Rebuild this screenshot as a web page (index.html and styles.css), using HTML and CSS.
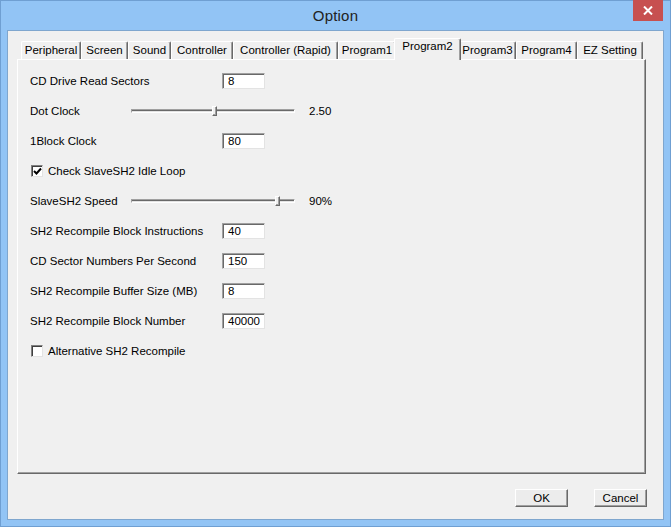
FILE: index.html
```html
<!DOCTYPE html>
<html>
<head>
<meta charset="utf-8">
<link rel="stylesheet" href="styles.css">
</head>
<body>
<div class="window">
  <div class="titlebar">
    <div></div>
    <div class="title">Option</div>
    <div class="close"><svg width="10" height="9" viewBox="0 0 10 9"><path d="M1 0.5 L9 8.5 M9 0.5 L1 8.5" stroke="#fff" stroke-width="2"/></svg></div>
  </div>
  <div class="client">
    <div class="tabs">
      <div class="tab t1">Peripheral</div>
      <div class="tab t2">Screen</div>
      <div class="tab t3">Sound</div>
      <div class="tab t4">Controller</div>
      <div class="tab t5">Controller (Rapid)</div>
      <div class="tab t6">Program1</div>
      <div class="tab t7 active">Program2</div>
      <div class="tab t8">Program3</div>
      <div class="tab t9">Program4</div>
      <div class="tab t10">EZ Setting</div>
    </div>
    <div class="panel">
      <div class="row">
        <span class="label">CD Drive Read Sectors</span>
        <span class="edit">8</span>
      </div>
      <div class="row">
        <span class="slabel">Dot Clock</span>
        <span class="slider"><span class="track"></span><span class="thumb thumb-dot"></span></span>
        <span class="value">2.50</span>
      </div>
      <div class="row">
        <span class="label">1Block Clock</span>
        <span class="edit">80</span>
      </div>
      <div class="row">
        <span class="check checked"><svg width="9" height="9" viewBox="0 0 9 9"><path d="M1 4 L3.5 6.5 L8 1.5" stroke="#000" stroke-width="2" fill="none"/></svg></span>
        <span class="clabel">Check SlaveSH2 Idle Loop</span>
      </div>
      <div class="row">
        <span class="slabel">SlaveSH2 Speed</span>
        <span class="slider"><span class="track"></span><span class="thumb thumb-speed"></span></span>
        <span class="value">90%</span>
      </div>
      <div class="row">
        <span class="label">SH2 Recompile Block Instructions</span>
        <span class="edit">40</span>
      </div>
      <div class="row">
        <span class="label">CD Sector Numbers Per Second</span>
        <span class="edit">150</span>
      </div>
      <div class="row">
        <span class="label">SH2 Recompile Buffer Size (MB)</span>
        <span class="edit">8</span>
      </div>
      <div class="row">
        <span class="label">SH2 Recompile Block Number</span>
        <span class="edit">40000</span>
      </div>
      <div class="row">
        <span class="check"></span>
        <span class="clabel">Alternative SH2 Recompile</span>
      </div>
    </div>
    <div class="buttons">
      <div class="btn">OK</div>
      <div class="btn">Cancel</div>
    </div>
  </div>
</div>
</body>
</html>
```

FILE: styles.css
```css
* { box-sizing: border-box; }
html, body { margin: 0; padding: 0; }
body {
  font-family: "Liberation Sans", Arial, sans-serif;
  font-size: 11.5px;
  color: #000;
  background: #92c4f5;
}
.window {
  width: 671px;
  height: 527px;
  background: #92c4f5;
  border: 1px solid #6f9fd2;
  padding: 0 6px 6px 6px;
  display: flex;
  flex-direction: column;
}
.titlebar {
  height: 29px;
  display: grid;
  grid-template-columns: 1fr auto 1fr;
  align-items: start;
}
.title {
  font-size: 15px;
  color: #222;
  padding-top: 6px;
  letter-spacing: 0.2px;
}
.close {
  justify-self: end;
  margin-right: 1px;
  margin-top: -1px;
  width: 30px;
  height: 21px;
  background: #c75050;
  display: flex;
  align-items: center;
  justify-content: center;
}
.client {
  flex: 1;
  background: #f0f0f0;
  border: 1px solid #7fa6ce;
  padding: 7px 0 0 9px;
  display: flex;
  flex-direction: column;
}
.tabs {
  display: flex;
  align-items: flex-end;
  height: 21px;
  padding-left: 4px;
}
.tab {
  height: 18px;
  border-top: 1px solid #fff;
  border-left: 1px solid #fff;
  border-right: 1px solid #696969;
  box-shadow: inset -1px 0 0 #a0a0a0;
  border-radius: 2px 2px 0 0;
  display: flex;
  align-items: center;
  justify-content: center;
  white-space: nowrap;
  padding-bottom: 1px;
}
.t1 { width: 60px; }
.t2 { width: 47px; }
.t3 { width: 43px; }
.t4 { width: 62px; }
.t5 { width: 105px; }
.t6 { width: 58px; }
.t7 { width: 63px; }
.t8 { width: 57px; }
.t9 { width: 61px; }
.t10 { width: 66px; }
.tab.active {
  height: 22px;
  margin: 0 -2px -1px -2px;
  width: 67px;
  background: #f0f0f0;
  position: relative;
  z-index: 1;
  align-items: flex-start;
  padding-top: 1px;
  padding-bottom: 0;
}
.panel {
  width: 629px;
  height: 415px;
  border-top: 1px solid #fff;
  border-left: 1px solid #fff;
  border-right: 1px solid #696969;
  border-bottom: 1px solid #696969;
  box-shadow: inset -1px -1px 0 #a0a0a0;
  padding: 6px 0 0 12px;
}
.row {
  height: 30px;
  display: flex;
  align-items: center;
}
.label { width: 192px; }
.slabel { width: 101px; }
.edit {
  width: 43px;
  height: 16px;
  background: #fff;
  border-top: 1px solid #a0a0a0;
  border-left: 1px solid #a0a0a0;
  border-right: 1px solid #e3e3e3;
  border-bottom: 1px solid #e3e3e3;
  box-shadow: inset 1px 1px 0 #696969;
  padding-left: 5px;
  line-height: 14px;
}
.slider {
  width: 164px;
  height: 12px;
  display: flex;
  align-items: center;
  position: relative;
}
.track {
  width: 100%;
  height: 4px;
  border-top: 1px solid #a0a0a0;
  border-left: 1px solid #a0a0a0;
  border-bottom: 1px solid #fff;
  border-right: 1px solid #fff;
  box-shadow: inset 0 1px 0 #696969;
  background: #e3e3e3;
}
.thumb {
  position: absolute;
  top: 1px;
  width: 5px;
  height: 10px;
  background: #f0f0f0;
  border-top: 1px solid #fff;
  border-left: 1px solid #fff;
  border-right: 1px solid #696969;
  border-bottom: 1px solid #696969;
  box-shadow: inset -1px -1px 0 #a0a0a0;
}
.thumb-dot { left: 81px; }
.thumb-speed { left: 144px; }
.value { margin-left: 14px; }
.check {
  width: 12px;
  height: 12px;
  margin-left: 1px;
  background: #fff;
  border-top: 1px solid #808080;
  border-left: 1px solid #808080;
  border-right: 1px solid #e3e3e3;
  border-bottom: 1px solid #e3e3e3;
  box-shadow: inset 1px 1px 0 #404040;
  display: flex;
  align-items: center;
  justify-content: center;
}
.clabel { margin-left: 5px; }
.buttons {
  display: flex;
  justify-content: flex-end;
  gap: 26px;
  margin-top: 15px;
  padding-right: 16px;
}
.btn {
  width: 53px;
  height: 18px;
  background: #ececec;
  border-top: 1px solid #fff;
  border-left: 1px solid #fff;
  border-right: 1px solid #696969;
  border-bottom: 1px solid #696969;
  box-shadow: inset -1px -1px 0 #a0a0a0;
  display: flex;
  align-items: center;
  justify-content: center;
}
```
